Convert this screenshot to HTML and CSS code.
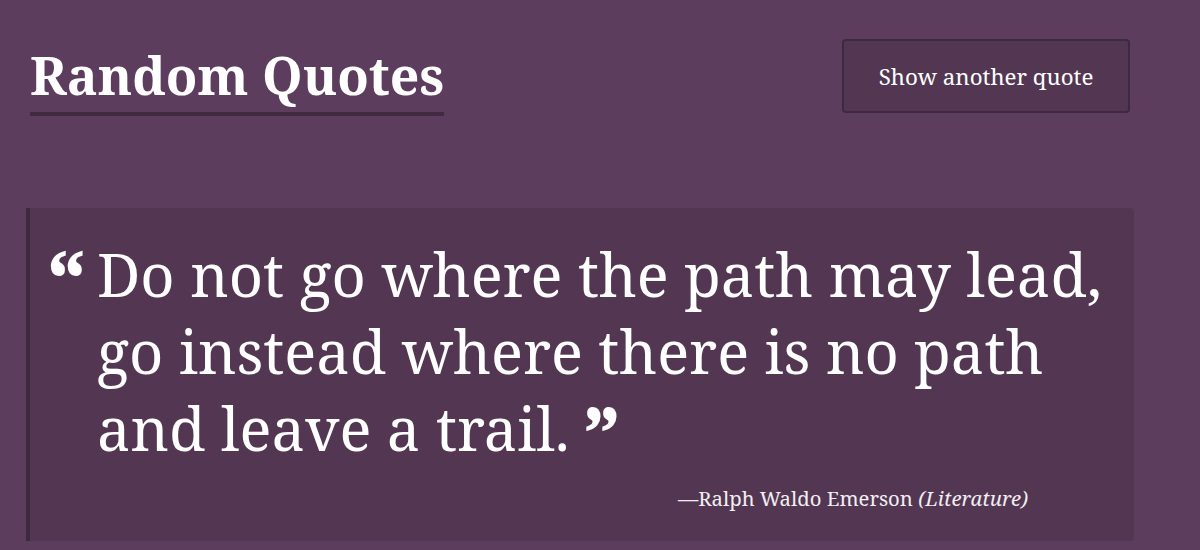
FILE: index.html
```html
<!DOCTYPE html>
<html lang="en">
<head>
<meta charset="utf-8">
<title>Random Quotes</title>
<link rel="stylesheet" href="styles.css">
</head>
<body>
<main class="page">
  <header class="header">
    <h1 class="title">Random Quotes</h1>
    <button class="btn" type="button">Show another quote</button>
  </header>
  <blockquote class="quote">
    <div class="quote-body">
      <span class="mark mark-open">“</span>
      <p class="quote-text">Do not go where the path may lead, go instead where there is no path and leave a trail. <span class="mark mark-close">”</span></p>
    </div>
    <footer class="cite">—Ralph Waldo Emerson <em>(Literature)</em></footer>
  </blockquote>
</main>
</body>
</html>
```
FILE: styles.css
```css
* { box-sizing: border-box; }

body {
  margin: 0;
  background: #5d3d5e;
  color: #ffffff;
  font-family: "Noto Serif", "DejaVu Serif", serif;
}

.page {
  width: 1200px;
  height: 550px;
  overflow: hidden;
}

.header {
  display: flex;
  justify-content: space-between;
  align-items: flex-start;
  padding: 39px 70px 0 30px;
}

.title {
  margin: 5px 0 0;
  display: inline-block;
  font-size: 51.7px;
  font-weight: 700;
  line-height: 62px;
  padding-bottom: 6px;
  border-bottom: 4px solid #3f2a40;
}

.btn {
  width: 288px;
  height: 74px;
  background: #533752;
  border: 2px solid #3e2a40;
  border-radius: 4px;
  color: #ffffff;
  font-family: "Noto Serif", "DejaVu Serif", serif;
  font-size: 22.3px;
  padding: 0;
  cursor: pointer;
}

.quote {
  margin: 92px 66px 0 26px;
  height: 333px;
  background: #533752;
  border-left: 4px solid #3d2a3f;
  border-radius: 0 4px 4px 0;
  padding: 27px 0 0 0;
}

.quote-body {
  display: flex;
  align-items: flex-start;
}

.mark {
  font-weight: 900;
  font-family: "Noto Serif", "DejaVu Serif", serif;
}

.mark-open {
  width: 67px;
  flex: none;
  text-align: right;
  padding: 3px 10px 0 0;
  font-size: 78px;
  line-height: 77px;
}

.quote-text {
  margin: 0;
  width: 1020px;
  font-size: 59.6px;
  line-height: 77px;
}

.mark-close {
  font-size: 74px;
  vertical-align: -9px;
  margin-left: -3px;
}

.cite {
  margin: 14px 106px 0 0;
  text-align: right;
  font-size: 20.3px;
  line-height: 29px;
  color: #f2eef2;
}

.cite em {
  font-style: italic;
}
```
